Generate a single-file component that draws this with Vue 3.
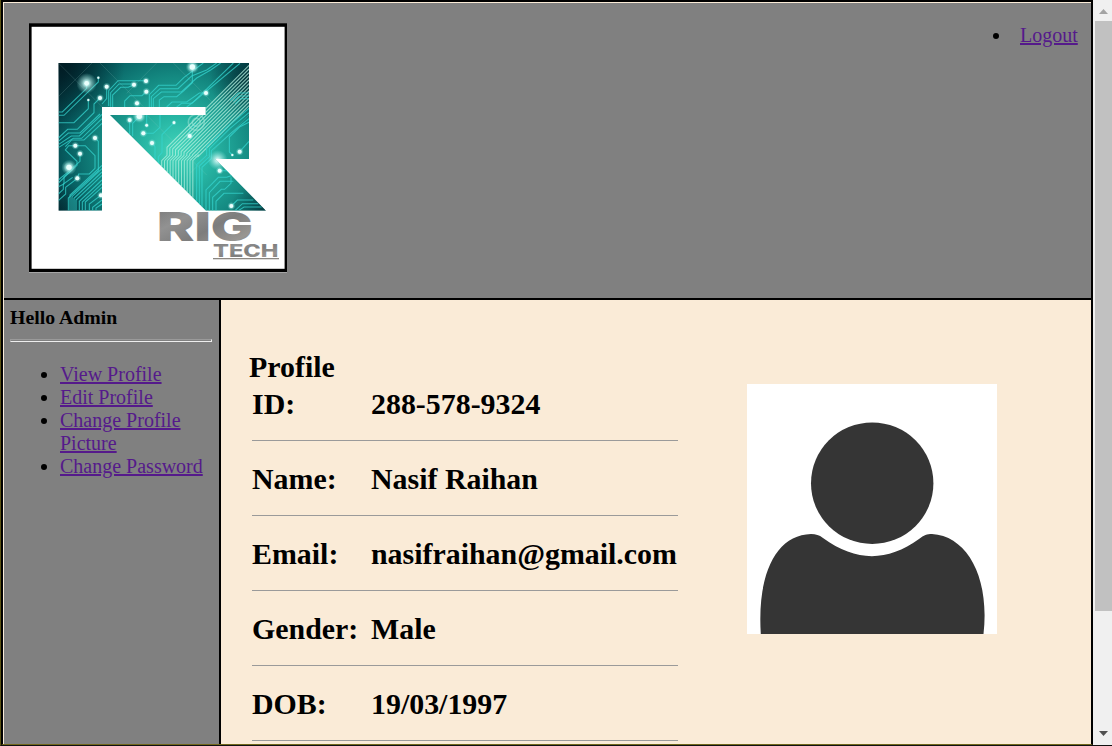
<script setup>
const links = ['View Profile', 'Edit Profile', 'Change Profile Picture', 'Change Password']
const rows = [
  { label: 'ID:', value: '288-578-9324' },
  { label: 'Name:', value: 'Nasif Raihan' },
  { label: 'Email:', value: 'nasifraihan@gmail.com' },
  { label: 'Gender:', value: 'Male' },
  { label: 'DOB:', value: '19/03/1997' },
]

// circuit traces of the emblem, in units of a third of a pixel
const traces = [
  'M175 336H187L260 265V250', 'M175 346H192L295 246V233', 'M175 368H222L265 326V300',
  'M175 414L203 388H232L282 338V312L300 294', 'M175 424L205 399H240L300 342',
  'M175 434L214 408H238L306 343', 'M175 443L220 415H245L306 356', 'M196 440L215 420H252L306 370',
  'M320 260V296L306 312', 'M326 318V272L354 242H438', 'M332 320V278L357 252H402',
  'M338 321V285L362 262H385L402 254', 'M374 321V303L390 287H426L439 275',
  'M448 321V284L476 256H528L552 232L610 189', 'M454 321V290L480 266H534L575 228L620 210L650 189',
  'M460 321V296L484 276H544L590 234L632 210L662 189', 'M478 321V300L492 290H530L552 272L577 248V201',
  'M500 321L516 306H560L598 279H618', 'M530 321L545 310H576L700 189', 'M560 321L580 306L720 190',
  'M226 437H256L285 467V505L268 522H236L232 535', 'M240 461V484L206 514L175 540',
  'M226 437H206L196 450L231 484V496L175 549', 'M285 414L295 424V512L205 594V632',
  'M175 560L192 552V530L212 514', 'M175 582L190 568V552L218 532',
  'M175 602L197 582V562L232 535', 'M210 632V585L306 496', 'M216 632V590L306 506',
  'M222 632V595L306 516', 'M228 632V600L306 526', 'M238 632V604L306 540', 'M247 632V606L306 551',
  'M256 632V606L306 562', 'M268 632V612L302 586', 'M278 632V622L306 600', 'M288 632V624L306 612',
  'M389 360V402', 'M398 408V370L418 350', 'M440 376V345', 'M430 400H460L480 382V345',
  'M456 429L465 440V478', 'M522 368L486 404V458L475 470V490', 'M569 408V387L589 368',
]
// parallel lines rising to the upper right edge at 45 degrees
const bundle = Array.from({ length: 12 }, (_, i) => {
  const x = 485 + i * 8.5
  const knee = x + 16
  const hit = 196 + i * 11
  const turn = 747 + hit - knee
  return `M${x} ${500 + i * 9}V482L${knee} 466V${turn}L747 ${hit}`
})
const lower = [
  'M590 610V494L620 466V440L680 382L747 325', 'M598 618V498L628 470V446L690 385L747 338',
  'M606 622V502L634 476V452L695 398L747 356', 'M618 632V570L655 532H680L698 526',
  'M628 632V578L660 544H700', 'M638 632V592L664 568H674L693 550V532', 'M648 632V604L672 580H730',
  'M694 618L712 600H760', 'M705 632L727 611H775', 'M715 632L732 621H785',
  'M659 512H680L690 520', 'M697 465L688 456V411L720 380L747 367', 'M719 455L747 424',
  'M747 279H715L690 302', 'M747 288H718L700 304', 'M747 296H722L705 312',
]
const nodes = [
  [260, 250, 7], [295, 233, 3], [320, 260, 6], [300, 294, 6], [265, 300, 3], [402, 254, 6], [438, 243, 6],
  [439, 275, 6], [411, 310, 6], [577, 201, 8], [618, 279, 6], [285, 414, 6], [226, 437, 6], [240, 461, 6],
  [207, 502, 8], [232, 535, 6], [303, 586, 6], [389, 360, 6], [418, 349, 8], [440, 376, 4], [430, 400, 6],
  [456, 429, 6], [522, 368, 4], [569, 408, 6], [719, 455, 6], [697, 465, 3], [659, 512, 6], [694, 618, 6],
]
const glows = [[260, 250, 31], [207, 502, 23], [577, 201, 20], [418, 349, 20], [653, 480, 30]]
</script>

<template>
  <div class="window">
    <div class="page">
      <header class="top">
        <svg class="logo" viewBox="0 0 258 250">
          <defs>
            <radialGradient id="teal" gradientUnits="userSpaceOnUse" cx="530" cy="455" r="410">
              <stop offset="0" stop-color="#42d6bc" />
              <stop offset=".25" stop-color="#27b6a4" />
              <stop offset=".55" stop-color="#148981" />
              <stop offset=".8" stop-color="#075f62" />
              <stop offset="1" stop-color="#033840" />
            </radialGradient>
            <radialGradient id="shade">
              <stop offset="0" stop-color="#001820" stop-opacity=".9" />
              <stop offset="1" stop-color="#001820" stop-opacity="0" />
            </radialGradient>
            <radialGradient id="glow">
              <stop offset="0" stop-color="#fff" />
              <stop offset=".3" stop-color="#c8f6f2" stop-opacity=".75" />
              <stop offset="1" stop-color="#8de8e0" stop-opacity="0" />
            </radialGradient>
            <linearGradient id="steel" x1="0" y1="0" x2="1" y2="1">
              <stop offset="0" stop-color="#747474" />
              <stop offset=".3" stop-color="#929292" />
              <stop offset=".55" stop-color="#7d7d7d" />
              <stop offset=".8" stop-color="#999692" />
              <stop offset="1" stop-color="#77736e" />
            </linearGradient>
            <clipPath id="mark">
              <path d="M175 189H747V477H646L798 632H618L330 345H617V321H306V632H175Z" />
            </clipPath>
          </defs>
          <rect y=".3" width="258" height="249" fill="#000" />
          <rect x="2.6" y="3.8" width="253" height="242" fill="#fff" />
          <rect y="249" width="258" height="1" fill="#a5a5a5" />
          <g transform="translate(-29 -23) scale(.33333)">
            <g clip-path="url(#mark)">
              <rect x="175" y="189" width="625" height="445" fill="url(#teal)" />
              <circle cx="175" cy="189" r="200" fill="url(#shade)" />
              <circle cx="747" cy="235" r="120" fill="url(#shade)" opacity=".75" />
              <circle cx="798" cy="640" r="110" fill="url(#shade)" opacity=".6" />
              <circle cx="175" cy="632" r="90" fill="url(#shade)" opacity=".5" />
              <path class="faint" d="M175 189L310 324M175 290L276 189M300 189L430 320M380 280L470 189M520 189L650 320M330 345L560 575M747 345L570 520M440 345L620 525" />
              <path v-for="d in traces" :key="d" class="trace" :d="d" />
              <path v-for="d in bundle" :key="d" class="trace pale" :d="d" />
              <path v-for="d in lower" :key="d" class="trace" :d="d" />
              <circle class="ring" cx="589" cy="367" r="24" />
              <circle class="ring" cx="589" cy="367" r="12" />
              <circle v-for="(g, i) in glows" :key="'g' + i" :cx="g[0]" :cy="g[1]" :r="g[2]" fill="url(#glow)" />
              <g v-for="(n, i) in nodes" :key="'n' + i">
                <circle :cx="n[0]" :cy="n[1]" :r="n[2] * 2" fill="url(#glow)" />
                <circle :cx="n[0]" :cy="n[1]" :r="n[2]" fill="#eafffd" />
              </g>
            </g>
          </g>
          <text class="brand rig" x="128" y="218" textLength="96" lengthAdjust="spacingAndGlyphs">RIG</text>
          <text class="brand tech" x="184" y="233.5" textLength="65.5" lengthAdjust="spacingAndGlyphs">TECH</text>
          <rect x="184" y="235" width="66" height="1.3" fill="#8b8782" />
        </svg>
        <ul class="session">
          <li><a>Logout</a></li>
        </ul>
      </header>
      <div class="body">
        <nav class="side">
          <div class="hello">Hello Admin</div>
          <div class="rule"></div>
          <ul class="menu">
            <li v-for="l in links" :key="l"><a>{{ l }}</a></li>
          </ul>
        </nav>
        <main class="main">
          <section class="profile">
            <h2>Profile</h2>
            <dl class="details">
              <div v-for="r in rows" :key="r.label" class="row">
                <dt>{{ r.label }}</dt>
                <dd>{{ r.value }}</dd>
              </div>
            </dl>
          </section>
          <svg class="avatar" viewBox="0 0 250 250">
            <rect width="250" height="250" fill="#fff" />
            <ellipse cx="125.2" cy="99.2" rx="61.2" ry="60.8" fill="#353535" />
            <path d="M13.8 250C10 190 29 151 64 150C69 150 72 151 76 154C109 178 140 178 172 155C177 151 180 150 185 150C220 152 243 193 236.5 250Z" fill="#353535" />
          </svg>
        </main>
      </div>
    </div>
    <div class="scroll">
      <svg viewBox="0 0 17 21"><path d="M4 14L8.5 9L13 14Z" fill="#a3a3a3" /></svg>
      <div class="thumb"></div>
      <svg class="down" viewBox="0 0 17 21"><path d="M4 7H13L8.5 12Z" fill="#505050" /></svg>
    </div>
  </div>
</template>

<style>
body { margin: 0; overflow: hidden; }
</style>

<style scoped>
* { box-sizing: border-box; }
.window {
  width: 1112px; height: 746px; display: flex; overflow: hidden;
  border-left: 1px solid #5c5312; border-bottom: 1px solid #111;
  font: 20px/23px "Liberation Serif", "Times New Roman", serif; color: #000;
}
.page {
  width: 1092px; height: 745px; display: flex; flex-direction: column;
  background: #faebd7; border: 2px solid #000; border-bottom: 1px solid #71671c;
  padding: 1px 0 0 1px;
}
.top {
  height: 297px; flex: none; display: flex; justify-content: space-between;
  background: #808080; border-bottom: 2px solid #000; padding: 20px 13px 0 25px;
}
.logo { width: 258px; height: 250px; display: block; }
.trace { fill: none; stroke: #35d5d0; stroke-width: 3.2; opacity: .75; }
.pale { stroke: #b4f0df; }
.faint { fill: none; stroke: #a3d5d0; stroke-width: 2; opacity: .25; }
.ring { fill: none; stroke: #a0e6d8; stroke-width: 5; opacity: .5; }
.brand { font-family: Inter, "Liberation Sans", sans-serif; font-weight: 900; fill: url(#steel); }
.rig { font-size: 40px; }
.tech { font-size: 17px; font-weight: 800; }
ul { margin: 0; padding: 0; }
a { color: #551a8b; text-decoration: underline; }
.session { width: 66px; padding-top: 1px; }
.session a { padding-left: 8px; }
.body { flex: 1; min-height: 0; display: flex; }
.side { width: 217px; background: #808080; border-right: 2px solid #000; padding: 6px 7px 0 6px; }
.hello { font-weight: bold; font-size: 19.8px; }
.rule { height: 3px; margin-top: 10px; border: 1px solid #eee; border-top-color: #9a9a9a; border-left-color: #9a9a9a; }
.menu { margin-top: 21px; padding-left: 50px; }
.main { flex: 1; display: flex; overflow: hidden; padding: 50px 0 0 28px; }
.profile { width: 498px; flex: none; font-size: 29.9px; line-height: 34px; font-weight: bold; }
h2 { font-size: 29.9px; line-height: 34px; margin: 0 0 3px; }
.details { margin: 0 0 0 3px; width: 426px; }
.row { display: grid; grid-template-columns: 119px 1fr; height: 75px; position: relative; }
.row::after { content: ""; position: absolute; left: 0; right: 0; top: 53px; height: 1px; background: #9a9a9a; }
dd { margin: 0; white-space: nowrap; }
.avatar { width: 250px; height: 250px; flex: none; margin-top: 34px; }
.scroll {
  width: 19px; padding-left: 2px; background: #f0f0f0; height: 745px;
  display: flex; flex-direction: column;
}
.scroll svg { width: 17px; height: 21px; display: block; flex: none; }
.thumb { height: 590px; background: #c1c1c1; }
.scroll .down { margin-top: auto; }
</style>
